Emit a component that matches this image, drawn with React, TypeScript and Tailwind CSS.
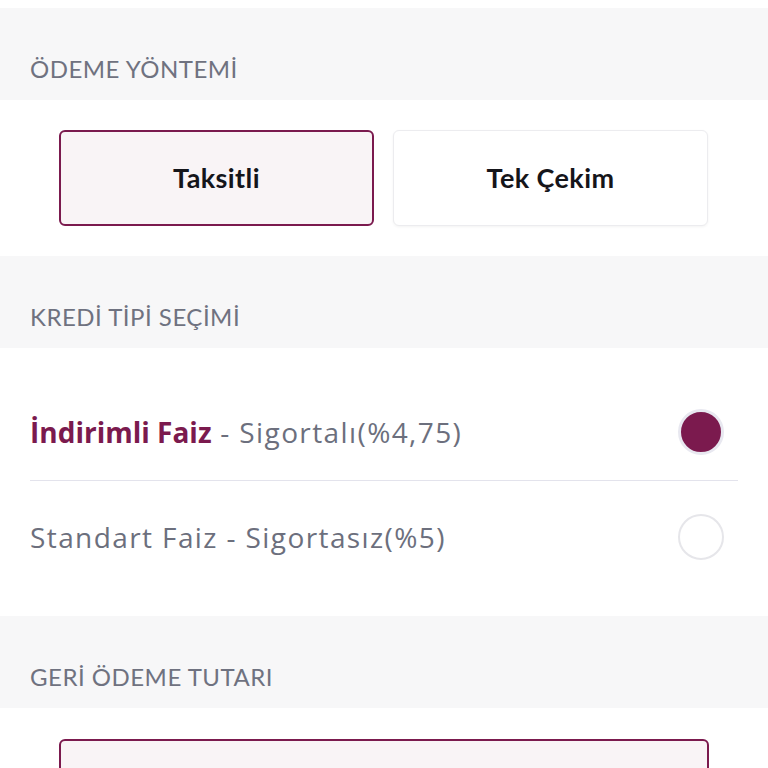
import { useState } from "react";

type Option = { id: string; bold: string; rest: string };

const krediTipleri: Option[] = [
  { id: "indirimli", bold: "İndirimli Faiz", rest: " - Sigortalı(%4,75)" },
  { id: "standart", bold: "Standart Faiz", rest: " - Sigortasız(%5)" },
];

const font = { fontFamily: "Lato, 'Noto Sans', sans-serif" };
const wide = { fontFamily: "'Open Sans', 'Noto Sans', sans-serif" };

function SectionHeader({ title }: { title: string }) {
  return (
    <div className="h-[92px] bg-[#f7f7f8] pl-[30px] pt-[45px]">
      <h2 className="text-[24px] leading-8 font-normal text-[#6f7280] tracking-[0.5px]">{title}</h2>
    </div>
  );
}

export default function App() {
  const [odeme, setOdeme] = useState("taksitli");
  const [kredi, setKredi] = useState("indirimli");

  return (
    <div className="w-[768px] h-[768px] overflow-hidden bg-white pt-2" style={font}>
      <SectionHeader title="ÖDEME YÖNTEMİ" />

      {/* Payment method */}
      <div className="pl-[59px] pr-[60px] py-[30px] grid grid-cols-2 gap-[19px]">
        {[
          { id: "taksitli", label: "Taksitli" },
          { id: "tek", label: "Tek Çekim" },
        ].map((b) => {
          const active = odeme === b.id;
          return (
            <button
              key={b.id}
              onClick={() => setOdeme(b.id)}
              className={
                active
                  ? "h-[96px] rounded-md border-2 border-[#7b1a4e] bg-[#f9f4f6] text-[27px] font-bold tracking-[0.4px] text-[#15151a]"
                  : "h-[96px] rounded-md border border-[#ececef] bg-white shadow-[0_1px_3px_rgba(0,0,0,0.05)] text-[27px] font-bold tracking-[0.4px] text-[#15151a]"
              }
            >
              {b.label}
            </button>
          );
        })}
      </div>

      <SectionHeader title="KREDİ TİPİ SEÇİMİ" />

      {/* Credit type */}
      <div className="h-[268px] px-[30px] pt-[36px]" style={wide}>
        {krediTipleri.map((k, i) => {
          const active = kredi === k.id;
          return (
            <div
              key={k.id}
              onClick={() => setKredi(k.id)}
              className={
                i === 0
                  ? "h-[97px] flex items-center justify-between pr-[14px] border-b border-[#e3e3ec] cursor-pointer"
                  : "h-[112px] flex items-center justify-between pr-[14px] cursor-pointer"
              }
            >
              <span className="text-[28px] tracking-[1.4px] text-[#6c6f7d]">
                <span className={active ? "font-bold tracking-normal text-[#7b1a4e]" : ""}>{k.bold}</span>
                {k.rest}
              </span>
              {active ? (
                <span className="w-[46px] h-[46px] rounded-full border-[3px] border-[#e8e8f0] bg-[#7b1a4e]" />
              ) : (
                <span className="w-[46px] h-[46px] rounded-full border-2 border-[#e6e6ea] bg-white" />
              )}
            </div>
          );
        })}
      </div>

      <SectionHeader title="GERİ ÖDEME TUTARI" />

      <div className="pl-[59px] pr-[59px] pt-[31px]">
        <div className="h-[96px] rounded-md border-2 border-[#7b1a4e] bg-[#f9f4f6]" />
      </div>
    </div>
  );
}
